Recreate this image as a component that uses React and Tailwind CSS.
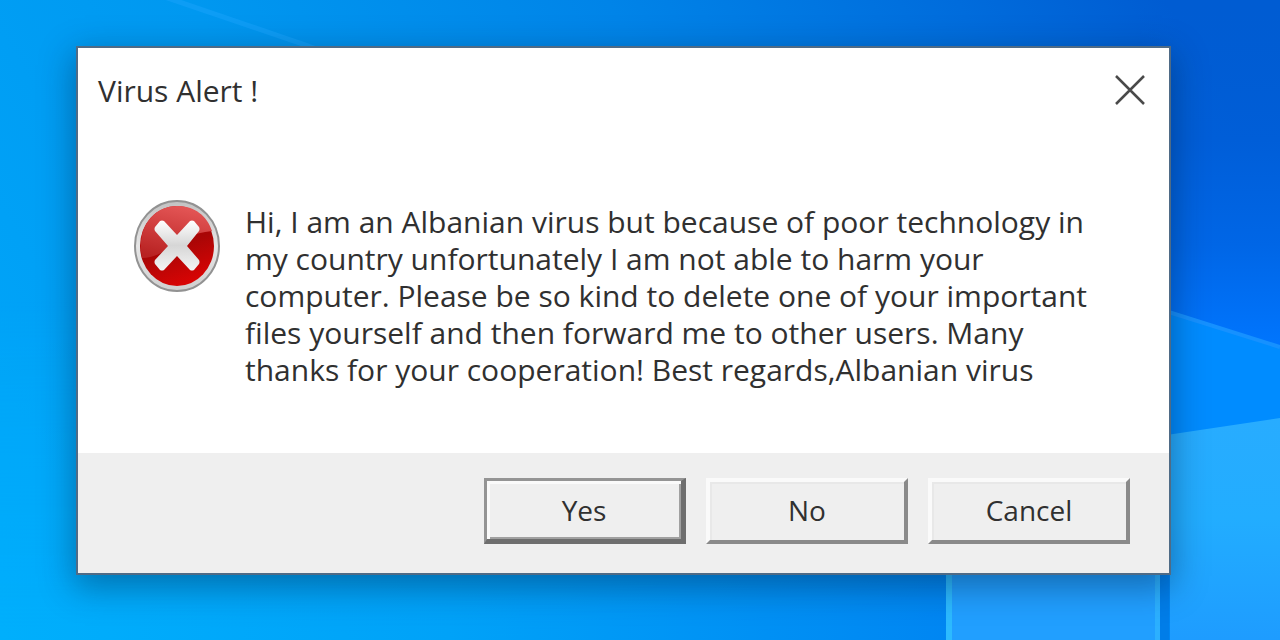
function Wallpaper() {
  return (
    <svg
      className="absolute inset-0 h-full w-full"
      viewBox="0 0 1280 640"
      preserveAspectRatio="none"
      aria-hidden="true"
    >
      <defs>
        <linearGradient id="sky" x1="0" y1="0.6" x2="1" y2="0.3">
          <stop offset="0" stopColor="#00a4f8" />
          <stop offset="0.3" stopColor="#0098f0" />
          <stop offset="0.6" stopColor="#0084e8" />
          <stop offset="0.85" stopColor="#006cdc" />
          <stop offset="1" stopColor="#005cd2" />
        </linearGradient>
        <linearGradient id="floor" x1="0" y1="0" x2="1" y2="0">
          <stop offset="0" stopColor="#00affc" />
          <stop offset="0.35" stopColor="#00a2f8" />
          <stop offset="0.6" stopColor="#0090f4" />
          <stop offset="0.74" stopColor="#0086f2" />
        </linearGradient>
        <linearGradient id="beam" x1="0" y1="0" x2="0" y2="1">
          <stop offset="0" stopColor="#005cd4" stopOpacity="0" />
          <stop offset="0.4" stopColor="#005ed8" />
          <stop offset="0.7" stopColor="#0066e6" />
          <stop offset="1" stopColor="#0076ff" />
        </linearGradient>
        <linearGradient id="pane" x1="0" y1="0" x2="0" y2="1">
          <stop offset="0" stopColor="#28acff" />
          <stop offset="0.45" stopColor="#22adff" />
          <stop offset="1" stopColor="#1e9cff" />
        </linearGradient>
        <linearGradient id="fade" x1="0" y1="0" x2="0" y2="1">
          <stop offset="0" stopColor="#fff" stopOpacity="0" />
          <stop offset="1" stopColor="#fff" />
        </linearGradient>
        <mask id="lower">
          <rect y="300" width="1280" height="340" fill="url(#fade)" />
        </mask>
      </defs>
      <rect width="1280" height="640" fill="url(#sky)" />
      <rect width="1280" height="640" fill="url(#floor)" mask="url(#lower)" />
      <path d="M150 -8L320 50" stroke="#18a2fa" strokeWidth="5" opacity="0.55" />
      <path d="M1140 0H1280V350L1140 304Z" fill="url(#beam)" />
      <path d="M1140 303L1280 347V420L1140 440Z" fill="#008cff" />
      <path d="M1140 303L1280 347" stroke="#1691ff" strokeWidth="4" />
      <path d="M1160 436L1280 418V640H1170V560H1160Z" fill="url(#pane)" />
      <rect x="948" y="560" width="212" height="80" fill="#219fff" />
      <rect x="946" y="560" width="6" height="80" fill="#2cbaff" />
      <rect x="1155" y="560" width="5" height="80" fill="#2cb0ff" />
      <rect x="1160" y="560" width="9" height="80" fill="#007de8" />
    </svg>
  );
}

function ErrorIcon() {
  return (
    <svg className="h-[92px] w-[88px] shrink-0" viewBox="0 0 88 92" role="img" aria-label="Error">
      <defs>
        <linearGradient id="rim" x1="0" y1="0" x2="0" y2="1">
          <stop offset="0" stopColor="#c2c2c2" />
          <stop offset="0.5" stopColor="#e6e6e6" />
          <stop offset="1" stopColor="#cfcfcf" />
        </linearGradient>
        <linearGradient id="red" x1="0.3" y1="0" x2="0.65" y2="1">
          <stop offset="0" stopColor="#c80000" />
          <stop offset="0.5" stopColor="#a80606" />
          <stop offset="1" stopColor="#dc0404" />
        </linearGradient>
        <linearGradient id="gloss" x1="0.6" y1="0" x2="0.3" y2="1">
          <stop offset="0" stopColor="#e45656" />
          <stop offset="1" stopColor="#b82222" />
        </linearGradient>
        <linearGradient id="cross" x1="0" y1="0" x2="0" y2="1">
          <stop offset="0" stopColor="#ffffff" />
          <stop offset="0.5" stopColor="#d6d6d6" />
          <stop offset="1" stopColor="#f4f4f4" />
        </linearGradient>
      </defs>
      <ellipse cx="44" cy="46" rx="42" ry="45" fill="url(#rim)" stroke="#929292" strokeWidth="2" />
      <ellipse cx="44" cy="46" rx="37" ry="40" fill="url(#red)" />
      <path d="M9 58C3 28 20 6 44 6C62 6 74 16 79 31C60 33 48 39 38 47C28 54 18 58 9 58Z" fill="url(#gloss)" />
      <path
        d="M31 21L44 35L57 21Q59 20 61 21L66 27Q67 29 66 31L54 46L66 60Q67 62 66 64L61 70Q59 71 57 70L44 56L31 70Q29 71 27 70L22 64Q21 62 22 60L35 46L22 31Q21 29 22 27L27 21Q29 20 31 21Z"
        fill="url(#cross)"
      />
    </svg>
  );
}

const message = [
  "Hi, I am an Albanian virus but because of poor technology in",
  "my country unfortunately I am not able to harm your",
  "computer. Please be so kind to delete one of your important",
  "files yourself and then forward me to other users. Many",
  "thanks for your cooperation! Best regards,Albanian virus",
];

const raised =
  "flex h-[66px] w-[202px] items-center justify-center border-4 border-t-[#fafafa] border-l-[#fafafa] border-r-[#8a8a8a] border-b-[#8a8a8a] bg-[#efefef] pb-0.5 shadow-[inset_2px_2px_0_#e8e8e8]";
const primary =
  "flex h-[66px] w-[202px] items-center justify-center border-t-3 border-r-5 border-b-5 border-l-3 border-t-[#949494] border-l-[#949494] border-r-[#6e6e6e] border-b-[#6e6e6e] bg-[#efefef] shadow-[inset_3px_3px_0_#fafafa,inset_-2px_-2px_0_#a0a0a0]";

export default function App() {
  return (
    <main className="relative min-h-screen pt-[46px] pr-[109px] pb-[65px] pl-[76px] font-['Open_Sans',sans-serif] text-[30px] text-[#303030]">
      <Wallpaper />
      <section
        role="dialog"
        aria-labelledby="title"
        aria-describedby="message"
        className="relative border-2 border-[#4f6b86] bg-white shadow-[0_10px_32px_2px_rgba(0,30,60,0.4)]"
      >
        <header className="flex h-[84px] items-center justify-between pr-6 pl-5">
          <h1 id="title">Virus Alert !</h1>
          <button type="button" aria-label="Close">
            <svg className="h-[30px] w-[30px]" viewBox="0 0 30 30" fill="none" stroke="#4a4a4a" strokeWidth="2.500">
              <path d="M1 1L29 29M29 1L1 29" />
            </svg>
          </button>
        </header>
        <div className="flex gap-6 pt-[68px] pb-[65px] pl-[55px]">
          <ErrorIcon />
          <p id="message" className="pt-[3px] leading-[37px] whitespace-nowrap">
            {message.map((line) => (
              <span key={line} className="block">{line}</span>
            ))}
          </p>
        </div>
        <footer className="flex h-[120px] items-start justify-end gap-5 bg-[#efefef] pt-[25px] pr-[39px] text-[28px]">
          <button type="button" className={primary}>Yes</button>
          <button type="button" className={raised}>No</button>
          <button type="button" className={raised}>Cancel</button>
        </footer>
      </section>
    </main>
  );
}
